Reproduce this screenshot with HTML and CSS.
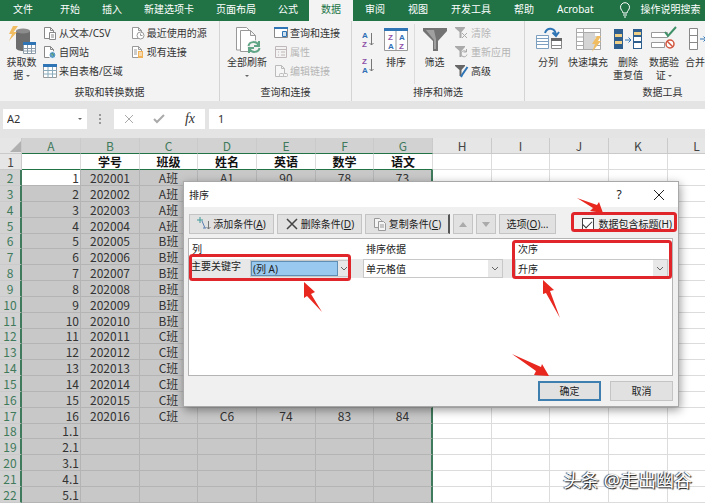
FILE: index.html
```
<!DOCTYPE html>
<html lang="zh-CN">
<head>
    <meta charset="utf-8">
    <title>排序</title>
    <link rel="stylesheet" href="styles.css">
</head>
<body>
<nav class="tabs">
    <a class="tab tab-file" href="#">文件</a>
    <a class="tab" href="#">开始</a>
    <a class="tab" href="#">插入</a>
    <a class="tab" href="#">新建选项卡</a>
    <a class="tab" href="#">页面布局</a>
    <a class="tab" href="#">公式</a>
    <a class="tab active" href="#">数据</a>
    <a class="tab" href="#">审阅</a>
    <a class="tab" href="#">视图</a>
    <a class="tab" href="#">开发工具</a>
    <a class="tab" href="#">帮助</a>
    <a class="tab" href="#">Acrobat</a>
    <a class="tab tell-me" href="#">
        <svg width="12" height="16" viewBox="0 0 12 16" fill="none" stroke="#fff"><path d="M4 11C4 9 1.500 8 1.500 5.200a4.500 4.500 0 0 1 9 0C10.500 8 8 9 8 11zM4 13h4M5 15h2"/></svg>
        操作说明搜索
    </a>
</nav>

<div class="ribbon">
    <section class="group group-get">
        <div class="group-body">
            <button class="big">
                <svg width="28" height="28" viewBox="0 0 28 28"><path d="M8 5v17c0 4 14 4 14 0V5z" fill="#6d6d6d"/><ellipse cx="15" cy="5" rx="7" ry="2.500" fill="#8c8c8c"/><path d="M5 0 1 8h3L1 15l8-9H5.500L10 0z" fill="#f0bd62"/><path d="M15.500 17.500h12v10h-12z" fill="#fff" stroke="#8a9aa8"/><path d="M15 16h13v3H15z" fill="#2f75b5"/><path d="M19.500 19v9M23.500 19v9M15 22.500h13M15 25h13" stroke="#8a9aa8"/></svg>
                <span>获取数<br>据 <i class="caret"></i></span>
            </button>
            <div class="stack">
                <button class="small">
                    <svg width="14" height="14" viewBox="0 0 14 14" fill="#fff" stroke="#888"><path d="M1.500 1.500h6l3 3v8h-9zM7.500 1.500v3h3"/><path d="M6.500 6.500h6v7h-6z"/><path d="M8 9h3M8 11h3"/></svg>
                    从文本/CSV</button>
                <button class="small">
                    <svg width="14" height="14" viewBox="0 0 14 14" fill="#fff" stroke="#888"><path d="M1.500 1.500h6l3 3v8h-9zM7.500 1.500v3h3"/><circle cx="9.500" cy="10" r="3.500" fill="#5b9bc8" stroke="#fff"/><path d="M8 9h2v2" stroke="#3a8a5c"/></svg>
                    自网站</button>
                <button class="small">
                    <svg width="14" height="14" viewBox="0 0 14 14"><path d="M.5.5h13v13H.5z" fill="#fff" stroke="#999"/><path d="M0 0h14v3H0z" fill="#2f75b5"/><path d="M5 3v11M9.500 3v11M0 6.500h14M0 10h14" stroke="#8ab"/></svg>
                    来自表格/区域</button>
            </div>
            <div class="stack">
                <button class="small">
                    <svg width="14" height="14" viewBox="0 0 14 14" fill="#fff" stroke="#999"><path d="M1.500 1.500h6l3 3v8h-9zM7.500 1.500v3h3"/><circle cx="9.500" cy="9.500" r="3.500"/><path d="M9.500 7.500v2h2"/></svg>
                    最近使用的源</button>
                <button class="small">
                    <svg width="14" height="14" viewBox="0 0 14 14" fill="#fff" stroke="#999"><path d="M1.500 1.500h6l3 3v8h-9zM7.500 1.500v3h3M3 5h3M3 7h3M3 9h3"/><path d="M7 6h5v7H7z" fill="#f0b35a" stroke="none"/><path d="M8 8h3M8 10h3" stroke="#fff"/></svg>
                    现有连接</button>
            </div>
        </div>
        <h3>获取和转换数据</h3>
    </section>

    <section class="group group-query">
        <div class="group-body">
            <button class="big">
                <svg width="28" height="28" viewBox="0 0 28 28" fill="#fff" stroke="#999"><path d="M3.500 24V1.500h10l4 4V24z"/><path d="M7.500 25.500v-21h10l5 5v16zM17.500 4.500v5h5"/><circle cx="21" cy="21" r="7" fill="#f3f3f3" stroke="none"/><path d="M15.500 20c1-5 8-5 10-1M26 15v5h-5M26.500 22c-1 5-8 5-10 1M16 27v-5h5" fill="none" stroke="#5fa586" stroke-width="2"/></svg>
                <span>全部刷新<br><i class="caret"></i></span>
            </button>
            <div class="stack">
                <button class="small">
                    <svg width="14" height="14" viewBox="0 0 14 14"><path d="M.5 1.500h13v10H.5z" fill="#fff" stroke="#888"/><path d="M0 1h14v2H0z" fill="#2f75b5"/><path d="M8.500 5.500h4v5h-4z" fill="#cfe0ef" stroke="#2f75b5"/></svg>
                    查询和连接</button>
                <button class="small" disabled>
                    <svg width="14" height="14" viewBox="0 0 14 14" fill="none" stroke="#c0b8b8"><path d="M1.500 1.500h11v11h-11zM1.500 4.500h11M4 7h1M4 10h1M7 7h4M7 10h4"/></svg>
                    属性</button>
                <button class="small" disabled>
                    <svg width="14" height="14" viewBox="0 0 14 14" fill="#f6f6f6" stroke="#bbb"><path d="M1.500 1.500h6l3 3v8h-9zM7.500 1.500v3h3"/><rect x="5.500" y="9.500" width="4" height="3" rx="1"/><rect x="9.500" y="9.500" width="4" height="3" rx="1"/></svg>
                    编辑链接</button>
            </div>
        </div>
        <h3>查询和连接</h3>
    </section>

    <section class="group group-sort">
        <div class="group-body">
            <div class="az">
                <button aria-label="升序"><svg width="12" height="20" viewBox="0 0 12 20"><text class="glyph blue" x="0" y="8">A</text><text class="glyph purple" x="0" y="17">Z</text><path d="M9.500 3v12M7.500 13l2 2 2-2" fill="none" stroke="#777"/></svg></button>
                <button aria-label="降序"><svg width="12" height="20" viewBox="0 0 12 20"><text class="glyph purple" x="0" y="8">Z</text><text class="glyph blue" x="0" y="17">A</text><path d="M9.500 3v12M7.500 13l2 2 2-2" fill="none" stroke="#777"/></svg></button>
            </div>
            <button class="big sort-btn">
                <svg width="26" height="28" viewBox="0 0 26 28"><path d="M1.500 3.500h23v21h-23zM13 4v21" fill="#fff" stroke="#999"/><path d="M1 2h24v3H1z" fill="#2f75b5"/><text class="glyph purple" x="5" y="14">Z</text><text class="glyph blue" x="5" y="23">A</text><text class="glyph blue" x="16" y="14">A</text><text class="glyph purple" x="16" y="23">Z</text></svg>
                <span>排序</span>
            </button>
            <button class="big filter-btn">
                <svg width="26" height="28" viewBox="0 0 26 28"><path d="M1 2h24v3l-9 10v10h-5V15L1 5z" fill="#737373"/><path d="M4 4h8l2 9v10h-2V14z" fill="#a0a0a0"/></svg>
                <span>筛选</span>
            </button>
            <div class="stack">
                <button class="small" disabled>
                    <svg width="14" height="14" viewBox="0 0 14 14"><path d="M0 1h10v1L6.500 6v6h-2V6L0 2z" fill="#aaa"/><path d="M7 7l5 5M12 7l-5 5" stroke="#aaa"/></svg>
                    清除</button>
                <button class="small" disabled>
                    <svg width="14" height="14" viewBox="0 0 14 14"><path d="M0 1h10v1L6.500 6v6h-2V6L0 2z" fill="#aaa"/><path d="M11 6.500a3 3 0 1 0 1 3M11.500 4v3h-3" fill="none" stroke="#aaa"/></svg>
                    重新应用</button>
                <button class="small">
                    <svg width="14" height="14" viewBox="0 0 14 14"><path d="M0 1h10v1L6.500 6v6h-2V6L0 2z" fill="#666"/><path d="M12.500 3 7 11l-1 2" stroke="#2f75b5" stroke-width="2"/></svg>
                    高级</button>
            </div>
        </div>
        <h3>排序和筛选</h3>
    </section>

    <section class="group group-tools">
        <div class="group-body">
            <button class="big">
                <svg width="28" height="28" viewBox="0 0 28 28"><path d="M2.500 9.500h12v13h-12zM2 12.500h13M2 15.500h13M2 18.500h13" fill="#fff" stroke="#7d9fc0"/><path d="M17.500 13.500h10v9h-10zM17 19.500h11" fill="#fff" stroke="#888"/><path d="M17 12h11v3H17z" fill="#666"/><path d="M11 7c2-6 10-6 11 2M18.500 6.500 22 10l3-4" fill="none" stroke="#2f75b5" stroke-width="2"/></svg>
                <span>分列</span>
            </button>
            <button class="big wide">
                <svg width="28" height="28" viewBox="0 0 28 28"><path d="M2.500 2.500h24v21h-24zM2 6.500h25M2 11h25M2 15.500h25M2 19.500h25M9.500 2v22" fill="#fff" stroke="#aaa"/><path d="M10 7h11v16H10z" fill="#d5d5d5"/><path d="m23 10-5 8h3l-3 8 9-11h-3l3-5z" fill="#f0bd62"/></svg>
                <span>快速填充</span>
            </button>
            <button class="big">
                <svg width="28" height="28" viewBox="0 0 28 28"><path d="M0 3h9v20H0zM19 3h9v20h-9z" fill="#2f5f8f"/><path d="M1 8h7v3H1zM1 15h7v3H1zM20 6h7v3h-7z" fill="#f0cf86"/><path d="M20 11h7v4h-7zM20 17h7v5h-7z" fill="#fff"/><path d="M11 14h6M14.500 11.500 17 14l-2.500 2.500" fill="none" stroke="#2f75b5"/></svg>
                <span>删除<br>重复值</span>
            </button>
            <button class="big">
                <svg width="28" height="28" viewBox="0 0 28 28"><path d="M1.500 6.500h16v5h-16zM1.500 16.500h13v5h-13z" fill="#fff" stroke="#999"/><path d="m15 6 3 4 8-9" fill="none" stroke="#3f9168" stroke-width="2"/><circle cx="20" cy="18" r="4" fill="#fff" stroke="#d2553f" stroke-width="1.500"/><path d="m17 15 6 6" stroke="#d2553f" stroke-width="1.500"/></svg>
                <span>数据验<br>证 <i class="caret"></i></span>
            </button>
            <button class="big">
                <svg width="28" height="28" viewBox="0 0 28 28"><path d="M3.500 2.500h8v21h-8zM3 9.500h9M3 16.500h9" fill="#fff" stroke="#888"/><path d="M14 13h6M17.500 10.500 20 13l-2.500 2.500" fill="none" stroke="#2f75b5"/><path d="M21.500 8.500h6v10h-6z" fill="#fff" stroke="#888"/></svg>
                <span>合并计</span>
            </button>
        </div>
        <h3>数据工具</h3>
    </section>
</div>

<div class="formula-bar">
    <div class="name-box">
        <input type="text" value="A2" aria-label="名称框">
        <i class="caret"></i>
    </div>
    <svg class="dots" width="4" height="12" viewBox="0 0 4 12" fill="#999"><path d="M1 1h2v2H1zM1 5h2v2H1zM1 9h2v2H1z"/></svg>
    <div class="formula-tools">
        <svg width="10" height="10" viewBox="0 0 10 10" fill="none" stroke="#aaa"><path d="m1 1 8 8M9 1 1 9"/></svg>
        <svg width="12" height="10" viewBox="0 0 12 10" fill="none" stroke="#aaa" stroke-width="2"><path d="m1 5 3 3 7-7"/></svg>
        <span class="fx">fx</span>
    </div>
    <input class="formula" type="text" value="1" aria-label="编辑栏">
</div>

<div class="sheet">
    <table>
        <colgroup>
            <col class="col-head">
            <col class="w59"><col class="w59"><col class="w58">
            <col class="w59"><col class="w59"><col class="w58">
            <col class="w59"><col class="w59"><col class="w58">
            <col class="w59"><col class="w59"><col class="w58">
        </colgroup>
        <thead>
        <tr>
            <th class="corner"><svg width="12" height="12" viewBox="0 0 12 12"><path d="M12 1v11H1z" fill="#b0b0b0"/></svg></th>
            <th class="sel">A</th><th class="sel">B</th><th class="sel">C</th><th class="sel">D</th>
            <th class="sel">E</th><th class="sel">F</th><th class="sel">G</th>
            <th>H</th><th>I</th><th>J</th><th>K</th><th>L</th>
        </tr>
        </thead>
        <tbody id="cells"></tbody>
    </table>
</div>

<div class="dialog" role="dialog" aria-label="排序">
    <header>
        <span class="title">排序</span>
        <button class="win-btn" aria-label="帮助">?</button>
        <button class="win-btn" aria-label="关闭"><svg width="10" height="10" viewBox="0 0 10 10" stroke="#222"><path d="m0 0 10 10M10 0 0 10"/></svg></button>
    </header>
    <div class="toolbar">
        <button class="btn">
            <svg width="14" height="14" viewBox="0 0 14 14" fill="none"><path d="M3 0v6M0 3h6" stroke="#3f9a9a"/><path d="M5 4l3 7M6 11h3" stroke="#5b7fb0"/><path d="M11.500 4v8M9.500 10l2 2 2-2" stroke="#777"/></svg>
            <span>添加条件(<u>A</u>)</span></button>
        <button class="btn">
            <svg width="14" height="14" viewBox="0 0 14 14" fill="none" stroke="#444" stroke-width="1.500"><path d="m2 2 10 10M12 2 2 12"/></svg>
            <span>删除条件(<u>D</u>)</span></button>
        <button class="btn last">
            <svg width="14" height="14" viewBox="0 0 14 14" fill="#f4f4f4" stroke="#999"><path d="M1.500 1.500h5l2 2v7h-7z"/><path d="M5.500 4.500h5l2 2v7h-7zM7 8h4M7 10h4"/></svg>
            <span>复制条件(<u>C</u>)</span></button>
        <button class="btn move" aria-label="上移"><svg width="8" height="5" viewBox="0 0 8 5" fill="#aaa"><path d="M0 5 4 0l4 5z"/></svg></button>
        <button class="btn move" aria-label="下移"><svg width="8" height="5" viewBox="0 0 8 5" fill="#aaa"><path d="m0 0 4 5 4-5z"/></svg></button>
        <button class="btn options"><span>选项(<u>O</u>)...</span></button>
        <label class="check"><input type="checkbox" checked><span>数据包含标题(<u>H</u>)</span></label>
    </div>
    <div class="levels">
        <div class="level level-head">
            <span>列</span><span>排序依据</span><span>次序</span>
        </div>
        <div class="level">
            <div class="key">
                <label for="sort-key">主要关键字</label>
                <div class="combo current">
                    <select id="sort-key"><option>(列 A)</option></select>
                    <svg width="12" height="15" viewBox="0 0 12 15" fill="none" stroke="#666"><path d="m3 6 3 3 3-3"/></svg>
                </div>
            </div>
            <div class="combo">
                <select aria-label="排序依据"><option>单元格值</option></select>
                <svg width="14" height="17" viewBox="0 0 14 17" fill="none" stroke="#666"><path d="m4 7 3 3 3-3"/></svg>
            </div>
            <div class="combo">
                <select aria-label="次序"><option>升序</option></select>
                <svg width="14" height="17" viewBox="0 0 14 17" fill="none" stroke="#666"><path d="m4 7 3 3 3-3"/></svg>
            </div>
        </div>
    </div>
    <footer>
        <button class="btn ok">确定</button>
        <button class="btn cancel">取消</button>
    </footer>
</div>

<!-- red call-outs over the dialog -->
<svg class="marks" width="705" height="504" viewBox="0 0 705 504">
    <g fill="none" stroke="#e0262b" stroke-width="3">
        <rect x="572.500" y="213.500" width="103" height="17" rx="2"/>
        <rect x="190.500" y="255.500" width="159" height="24" rx="2"/>
        <rect x="513.500" y="241.500" width="157" height="36" rx="2"/>
    </g>
    <g fill="#e8271f">
        <path d="m577 198 20 7 2-3 4 11-13-2 3-3z"/>
        <path d="m304 282 11 10-4 2 11 18-15-16-3 2z"/>
        <path d="m543 280 11 10-4 1 10 27-14-25-3 1z"/>
        <path d="m512 354 29 13 1-3 7 12-15-1 2-4z"/>
    </g>
</svg>
<div class="watermark">头条 @走出幽谷</div>

<script>
    var rows = [
        ['', '学号', '班级', '姓名', '英语', '数学', '语文'],
        ['1', '202001', 'A班', 'A1', '90', '78', '73'],
        ['2', '202002', 'A班'],
        ['3', '202003', 'A班'],
        ['4', '202004', 'A班'],
        ['5', '202005', 'B班'],
        ['6', '202006', 'B班'],
        ['7', '202007', 'B班'],
        ['8', '202008', 'B班'],
        ['9', '202009', 'B班'],
        ['10', '202010', 'B班'],
        ['11', '202011', 'C班'],
        ['12', '202012', 'C班'],
        ['13', '202013', 'C班'],
        ['14', '202014', 'C班'],
        ['15', '202015', 'C班'],
        ['16', '202016', 'C班', 'C6', '74', '83', '84'],
        ['1.1'], ['2.1'], ['3.1'], ['4.1'], ['5.1']
    ];
    var body = document.getElementById('cells');

    rows.forEach(function (values, i) {
        var tr = document.createElement('tr');
        var head = document.createElement('th');
        head.innerText = i + 1;
        if (i > 0) head.className = 'sel';
        tr.appendChild(head);

        for (var c = 0; c < 12; c++) {
            var td = document.createElement('td');
            td.innerText = values[c] || '';
            if (i > 0 && c < 7) td.className = 'sel';
            tr.appendChild(td);
        }
        body.appendChild(tr);
    });
</script>
</body>
</html>
```
FILE: styles.css
```
* {
    box-sizing: border-box;
}

body {
    margin: 0;
    height: 100vh;
    display: flex;
    flex-direction: column;
    overflow: hidden;
    position: relative;
    background: #e4e4e4;
    color: #333;
    font-family: "Noto Sans", "Noto Sans CJK SC", sans-serif;
    font-size: 10px;
    line-height: 14px;
}

button,
input,
select {
    font: inherit;
    color: inherit;
    margin: 0;
    padding: 0;
    border: 0;
    background: none;
}

svg {
    display: block;
    flex: none;
}

/* ribbon tabs */
.tabs {
    display: flex;
    height: 21px;
    flex: none;
    background: #217346;
}

.tab {
    padding: 2px 11px 0;
    line-height: 14px;
    color: #fff;
    text-decoration: none;
    white-space: nowrap;
}

.tab-file {
    padding: 2px 16px 0 13px;
}

.tab.active {
    padding: 2px 12px 0;
    background: #f3f3f3;
    color: #217346;
}

.active ~ .tab {
    padding-left: 12px;
}

.active ~ .tell-me {
    display: flex;
    gap: 10px;
    padding-left: 14px;
}

/* ribbon */
.ribbon {
    display: flex;
    height: 80px;
    flex: none;
    background: #f3f3f3;
    overflow: hidden;
}

.group {
    display: flex;
    flex-direction: column;
    flex: none;
    padding-top: 3px;
    border-right: 1px solid #d4d4d4;
}

.group-get {
    width: 220px;
}

.group-query {
    width: 132px;
}

.group-sort {
    width: 173px;
}

.group-tools {
    width: 276px;
}

.group-body {
    display: flex;
    height: 60px;
}

.group h3 {
    margin: 0;
    font-size: 10px;
    line-height: 16px;
    font-weight: normal;
    text-align: center;
}

.big {
    display: flex;
    flex-direction: column;
    align-items: center;
    width: 40px;
    flex: none;
    padding-top: 2px;
    line-height: 13px;
    white-space: nowrap;
}

.big span {
    padding-top: 2px;
}

.group-get .big {
    width: 43px;
}

.group-query .big {
    width: 54px;
}

.group-tools .big {
    width: 36px;
}

.group-tools .big.wide {
    width: 44px;
}

.group-tools .group-body {
    padding-left: 5px;
}

.caret {
    display: inline-block;
    border: 2px solid transparent;
    border-top-color: #666;
    border-bottom: 0;
    vertical-align: middle;
}

.stack {
    display: flex;
    flex-direction: column;
    gap: 5px;
    padding-top: 2px;
    margin-right: 8px;
}

.small {
    display: flex;
    align-items: center;
    gap: 2px;
    height: 14px;
    white-space: nowrap;
}

.small:disabled {
    color: #b5b5b5;
}

.az {
    display: flex;
    flex-direction: column;
    gap: 6px;
    padding: 6px 4px 0 10px;
}

.group-sort .sort-btn {
    width: 36px;
}

.filter-btn {
    width: 40px;
    margin-right: 1px;
    border-left: 1px solid #dcdcdc;
}

.glyph {
    font-family: "Liberation Sans", sans-serif;
    font-size: 8px;
    font-weight: bold;
}

.blue {
    fill: #2f6fb5;
}

.purple {
    fill: #8e4fa8;
}

/* formula bar */
.formula-bar {
    display: flex;
    height: 37px;
    flex: none;
    padding: 8px 0 9px 3px;
}

.name-box {
    display: flex;
    align-items: center;
    width: 84px;
    padding: 0 5px 0 4px;
    background: #fff;
}

.name-box input {
    flex: 1;
    min-width: 0;
    font-size: 11px;
}

.dots {
    margin: 4px 12px 0 11px;
}

.formula-tools {
    display: flex;
    align-items: center;
    justify-content: space-between;
    width: 91px;
    padding: 0 10px;
    background: #fff;
}

.fx {
    font-family: "Liberation Serif", serif;
    font-style: italic;
    font-size: 14px;
}

.formula {
    flex: 1;
    min-width: 0;
    margin-left: 4px;
    padding-left: 9px;
    background: #fff;
    font-size: 11px;
}

/* sheet */
.sheet {
    flex: 1;
    overflow: hidden;
    background: #fff;
}

table {
    width: 726px;
    table-layout: fixed;
    border-collapse: separate;
    border-spacing: 0;
    font-family: "Noto Sans CJK SC", sans-serif;
    font-size: 12px;
    line-height: 14px;
}

.col-head {
    width: 22px;
}

.w59 {
    width: 59px;
}

.w58 {
    width: 58px;
}

tr {
    height: 16px;
}

tbody tr:nth-child(6n) {
    height: 15px;
}

th,
td {
    padding: 0;
    border-right: 1px solid #dcdcdc;
    border-bottom: 1px solid #dcdcdc;
    text-align: center;
    white-space: nowrap;
}

th {
    background: #e6e6e6;
    border-color: #cacaca;
    font-weight: normal;
    color: #444;
}

th.sel {
    background: #d2d2d2;
    color: #3f7a5c;
}

thead th.sel {
    border-bottom-color: #217346;
}

tbody th.sel {
    border-right: 2px solid #3f7a5c;
}

.corner svg {
    margin-left: 9px;
}

td.sel {
    background: #c8c8c8;
    border-color: #b4b4b4;
}

td:nth-child(2) {
    text-align: right;
    padding-right: 1px;
}

td.sel:nth-child(8) {
    border-right: 2px solid #3f7a5c;
}

tbody tr:first-child td {
    font-weight: bold;
    color: #111;
}

tbody tr:first-child td:nth-child(-n+8) {
    border-bottom-color: #217346;
}

/* active cell */
tbody tr:nth-child(2) td:nth-child(2) {
    background: #fff;
}

/* sort dialog */
.dialog {
    position: absolute;
    left: 183px;
    top: 181px;
    width: 496px;
    background: #f0f0f0;
    border: 1px solid #a8a8a8;
    box-shadow: 1px 3px 9px rgba(0, 0, 0, 0.4);
    color: #222;
}

.dialog header {
    display: flex;
    align-items: center;
    height: 25px;
    padding: 0 4px 0 5px;
    background: #fff;
}

.title {
    flex: 1;
}

.win-btn {
    display: flex;
    align-items: center;
    justify-content: center;
    width: 30px;
    margin-left: 10px;
    font-size: 12px;
}

.toolbar {
    display: flex;
    align-items: center;
    gap: 3px;
    padding: 7px 6px 4px 5px;
}

.btn {
    display: flex;
    align-items: center;
    justify-content: center;
    gap: 2px;
    width: 85px;
    height: 20px;
    background: #e1e1e1;
    border: 1px solid #c4c4c4;
    white-space: nowrap;
}

.btn.last {
    border-right: 2px solid #555;
}

.btn.move {
    width: 20px;
}

.btn.options {
    width: 57px;
}

.check {
    display: flex;
    align-items: center;
    gap: 5px;
    margin-left: auto;
    white-space: nowrap;
}

.check input {
    appearance: none;
    width: 12px;
    height: 12px;
    border: 1px solid #444;
    background: #fff;
    display: flex;
    justify-content: center;
}

.check input:checked::before {
    content: "";
    width: 4px;
    height: 8px;
    border: solid #333;
    border-width: 0 1px 1px 0;
    transform: rotate(45deg);
}

.levels {
    height: 138px;
    margin: 0 5px 0 4px;
    background: #fff;
    border: 1px solid #b4b4b4;
}

.level {
    display: grid;
    grid-template-columns: 162px 140px 1fr;
    column-gap: 12px;
    height: 19px;
    padding-right: 4px;
    background: #e8e8e8;
}

.level-head {
    height: 20px;
    align-items: center;
    padding-left: 3px;
    background: #fff;
}

.key {
    display: flex;
    justify-content: space-between;
    padding-left: 2px;
}

.combo {
    display: flex;
    background: #fff;
    border: 1px solid #c8c8c8;
}

.combo select {
    flex: 1;
    min-width: 0;
    appearance: none;
    padding-left: 2px;
}

.combo svg {
    background: #e8e8e8;
}

.current {
    width: 101px;
    height: 17px;
    margin-top: 1px;
}

.current select {
    background: #99c9ef;
    border: 1px solid #5f8fb5;
    padding-left: 1px;
}

.dialog footer {
    display: flex;
    justify-content: flex-end;
    gap: 9px;
    padding: 5px 5px 5px 0;
}

.dialog footer .btn {
    width: 63px;
}

.dialog footer .ok {
    border: 2px solid #3f7fb0;
}

.marks {
    position: absolute;
    left: 0;
    top: 0;
    pointer-events: none;
}

.watermark {
    position: absolute;
    right: 13px;
    bottom: 12px;
    font-size: 18px;
    line-height: 24px;
    color: #fff;
    text-shadow: 1px 1px 1px #111, -1px 0 1px #333;
}
```
